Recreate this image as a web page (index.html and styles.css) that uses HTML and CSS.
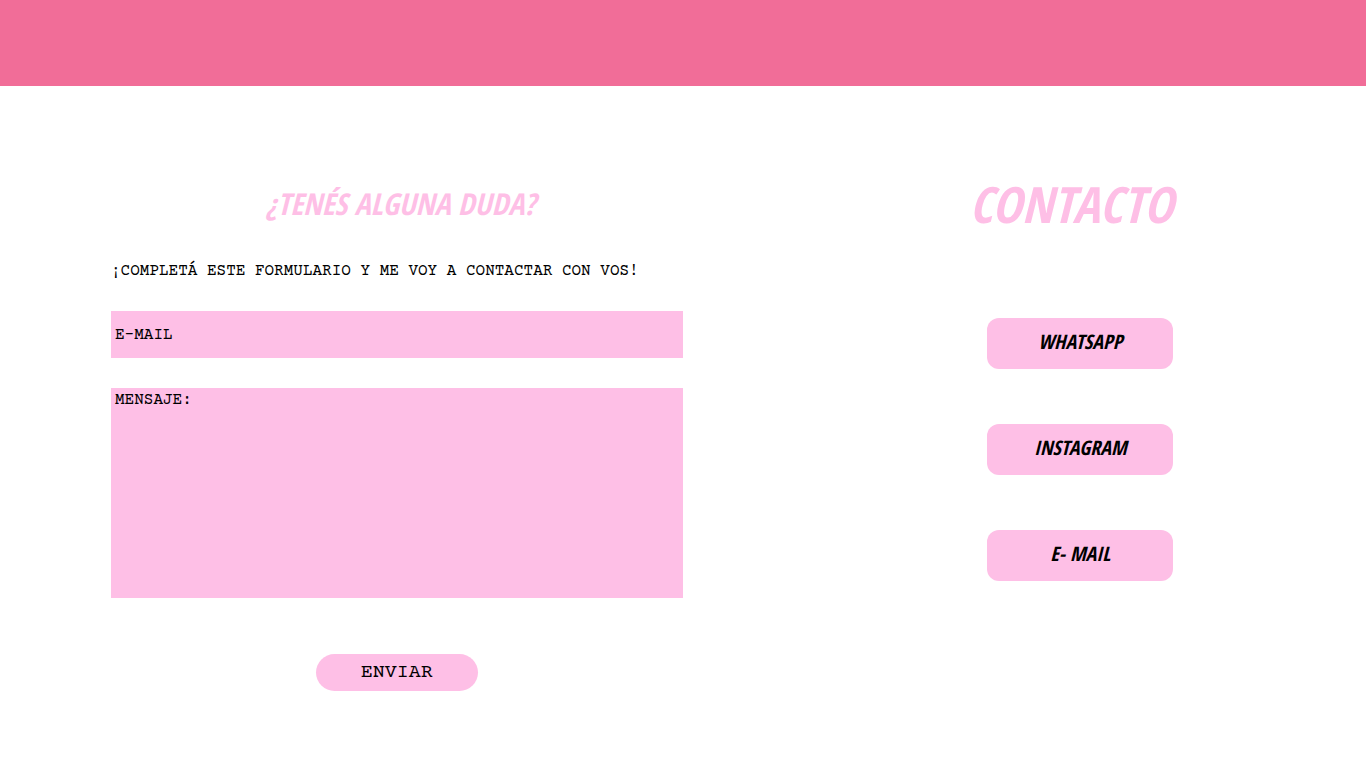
FILE: index.html
```html
<!DOCTYPE html>
<html lang="es">
<head>
<meta charset="utf-8">
<meta name="viewport" content="width=device-width, initial-scale=1">
<title>Contacto</title>
<link rel="stylesheet" href="styles.css">
</head>
<body>
<header class="top-bar"></header>
<main class="page">
  <section class="question">
    <h2 class="question-title">¿TENÉS ALGUNA DUDA?</h2>
    <form class="form">
      <p class="intro">¡COMPLETÁ ESTE FORMULARIO Y ME VOY A CONTACTAR CON VOS!</p>
      <input class="field" type="email" placeholder="E-MAIL" aria-label="E-mail">
      <textarea class="field message" placeholder="MENSAJE:" aria-label="Mensaje"></textarea>
      <button class="send" type="submit">ENVIAR</button>
    </form>
  </section>
  <section class="contact">
    <h1 class="contact-title">CONTACTO</h1>
    <nav class="links">
      <a class="link" href="#whatsapp">WHATSAPP</a>
      <a class="link" href="#instagram">INSTAGRAM</a>
      <a class="link" href="#email">E- MAIL</a>
    </nav>
  </section>
</main>
</body>
</html>
```

FILE: styles.css
```css
* {
  box-sizing: border-box;
}

body {
  margin: 0;
  background: #fff;
  color: #000;
  font-family: "Courier Prime", "Nimbus Mono PS", FreeMono, "Liberation Mono", "Courier New", monospace;
}

.top-bar {
  height: 86px;
  background: #f16d98;
}

.page {
  display: grid;
  grid-template-columns: 1fr 1fr;
  column-gap: 112px;
  padding: 86px 0 64px 111px;
}

.question-title,
.contact-title,
.link {
  font-family: "Open Sans Condensed", "Liberation Sans Narrow", "Liberation Sans", sans-serif;
  font-style: italic;
}

.question-title,
.contact-title {
  margin: 0;
  color: #febfe6;
  line-height: 64px;
  text-align: center;
}

.question-title {
  padding-left: 8px;
  font-size: 30px;
  font-weight: 700;
}

.contact-title {
  padding-right: 18px;
  font-size: 50px;
  font-weight: 700;
}

.form {
  display: flex;
  flex-direction: column;
}

.intro {
  margin: 24px 0 28px;
  font-size: 16px;
  line-height: 23px;
}

.field {
  display: block;
  width: 100%;
  height: 47px;
  margin: 0 0 30px;
  padding: 0 4px;
  border: 0;
  border-radius: 0;
  background: #febfe6;
  color: #000;
  font: inherit;
}

.field::placeholder {
  color: #000;
  opacity: 1;
}

.message {
  height: 210px;
  margin-bottom: 56px;
  padding-top: 3px;
  resize: none;
}

.send {
  align-self: center;
  width: 162px;
  height: 37px;
  padding: 0;
  border: 0;
  border-radius: 20px;
  background: #febfe6;
  color: #000;
  font-family: inherit;
  font-size: 20px;
}

.links {
  display: flex;
  flex-direction: column;
  align-items: center;
  gap: 55px;
  padding-top: 82px;
}

.link {
  width: 186px;
  height: 51px;
  border-radius: 12px;
  background: #febfe6;
  color: #000;
  font-size: 20px;
  font-weight: 700;
  line-height: 48px;
  text-align: center;
  text-decoration: none;
}
```
